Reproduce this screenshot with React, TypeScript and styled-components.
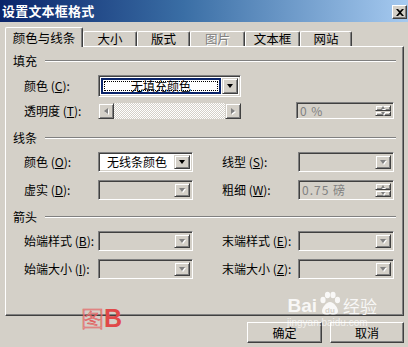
import React from 'react';
import styled, { createGlobalStyle } from 'styled-components';

const FONT = `"Noto Sans CJK SC", "Liberation Sans", sans-serif`;
const FACE = '#d4d0c8';

const Global = createGlobalStyle`
  html, body { margin: 0; padding: 0; background: ${FACE}; }
  body { font-family: ${FONT}; font-size: 12px; color: #000; }
  * { box-sizing: border-box; }
`;

const Dialog = styled.div`
  position: relative;
  width: 408px;
  height: 347px;
  overflow: hidden;
  background: ${FACE};
  display: flex;
  flex-direction: column;
`;

const TitleBar = styled.div`
  height: 22px;
  flex: none;
  display: flex;
  align-items: center;
  justify-content: space-between;
  padding: 0 1px 0 2px;
  background: linear-gradient(to right, #0a246a 0%, #3a6ea5 45%, #a6caf0 100%);
`;

const Title = styled.span`
  color: #fff;
  font-weight: bold;
  font-size: 13px;
  line-height: 22px;
  letter-spacing: 0.2px;
`;

const CloseBtn = styled.div`
  width: 15px;
  height: 14px;
  margin-top: 2px;
  background: ${FACE};
  border-top: 1px solid #fff;
  border-left: 1px solid #fff;
  border-right: 1px solid #404040;
  border-bottom: 1px solid #404040;
  box-shadow: inset -1px -1px #808080;
  display: flex;
  align-items: center;
  justify-content: center;
`;

const Tabs = styled.div`
  display: flex;
  align-items: flex-end;
  height: 19px;
  margin-top: 5px;
  padding-left: 5px;
  position: relative;
  z-index: 1;
`;

const Tab = styled.div<{ $active?: boolean; $disabled?: boolean; $w: number }>`
  width: ${(p) => p.$w}px;
  height: ${(p) => (p.$active ? 20 : 15)}px;
  margin-bottom: ${(p) => (p.$active ? -1 : 0)}px;
  background: ${FACE};
  border-top: 1px solid #fff;
  border-left: 1px solid #fff;
  border-right: 1px solid #404040;
  box-shadow: inset -1px 0 #808080;
  border-radius: 2px 2px 0 0;
  display: flex;
  align-items: center;
  justify-content: center;
  font-size: 12.5px;
  line-height: 14px;
  padding-top: ${(p) => (p.$active ? 1 : 0)}px;
  color: ${(p) => (p.$disabled ? '#808080' : '#000')};
  text-shadow: ${(p) => (p.$disabled ? '1px 1px #fff' : 'none')};
`;

const Panel = styled.div`
  margin-left: 5px;
  width: 399px;
  height: 270px;
  flex: none;
  border-top: 1px solid #fff;
  border-left: 1px solid #fff;
  border-right: 1px solid #404040;
  border-bottom: 1px solid #404040;
  box-shadow: inset -1px -1px #808080;
  padding-left: 7px;
  display: flex;
  flex-direction: column;
`;

const SectionHeader = styled.div<{ $mt: number }>`
  display: flex;
  align-items: center;
  height: 14px;
  margin-top: ${(p) => p.$mt}px;
  gap: 8px;
  padding-right: 7px;
  line-height: 14px;
`;

const HeaderLine = styled.div`
  flex: 1;
  height: 2px;
  border-top: 1px solid #808080;
  border-bottom: 1px solid #fff;
`;

const Row = styled.div<{ $mt: number; $h: number }>`
  display: grid;
  grid-template-columns: 74px 124px 76px 96px;
  align-items: center;
  height: ${(p) => p.$h}px;
  margin-top: ${(p) => p.$mt}px;
  padding-left: 11px;
`;

const Label = styled.span`
  font-size: 12px;
  line-height: 14px;
  white-space: nowrap;
`;

const U = styled.span`
  text-decoration: underline;
`;

const ComboBox = styled.div<{ $w: number; $h: number; $disabled?: boolean; $span?: boolean }>`
  width: ${(p) => p.$w}px;
  height: ${(p) => p.$h}px;
  grid-column: ${(p) => (p.$span ? 'span 2' : 'auto')};
  border-top: 1px solid #808080;
  border-left: 1px solid #808080;
  border-right: 1px solid #fff;
  border-bottom: 1px solid #fff;
  box-shadow: inset 1px 1px #404040, inset -1px -1px ${FACE};
  background: ${(p) => (p.$disabled ? FACE : '#fff')};
  display: flex;
  align-items: stretch;
  padding: 2px;
`;

const ComboText = styled.div`
  flex: 1;
  display: flex;
  align-items: center;
  padding-left: 6px;
  font-size: 12px;
  line-height: 14px;
  white-space: nowrap;
`;

const FocusText = styled.div`
  flex: 1;
  margin-right: 1px;
  border: 2px solid #0a246a;
  background: #fff;
  display: flex;
  align-items: stretch;
  padding: 1px;
`;

const FocusInner = styled.div`
  flex: 1;
  outline: 1px dotted #000;
  outline-offset: -1px;
  display: flex;
  align-items: center;
  justify-content: center;
  font-size: 12px;
  line-height: 14px;
  white-space: nowrap;
`;

const RaisedBtn = styled.div<{ $w: number }>`
  width: ${(p) => p.$w}px;
  flex: none;
  background: ${FACE};
  border-top: 1px solid ${FACE};
  border-left: 1px solid ${FACE};
  border-right: 1px solid #404040;
  border-bottom: 1px solid #404040;
  box-shadow: inset 1px 1px #fff, inset -1px -1px #808080;
  display: flex;
  align-items: center;
  justify-content: center;
`;

const DownTri = styled.div<{ $disabled?: boolean }>`
  width: 0;
  height: 0;
  border-left: 3.5px solid transparent;
  border-right: 3.5px solid transparent;
  border-top: 4px solid ${(p) => (p.$disabled ? '#808080' : '#000')};
  filter: ${(p) => (p.$disabled ? 'drop-shadow(1px 1px 0 #fff)' : 'none')};
`;

const SideTri = styled.div<{ $dir: 'left' | 'right' }>`
  width: 0;
  height: 0;
  border-top: 3.5px solid transparent;
  border-bottom: 3.5px solid transparent;
  ${(p) => (p.$dir === 'left' ? 'border-right: 4px solid #808080;' : 'border-left: 4px solid #808080;')}
  filter: drop-shadow(1px 1px 0 #fff);
`;

const SmallTri = styled.div<{ $up?: boolean }>`
  width: 0;
  height: 0;
  border-left: 2.5px solid transparent;
  border-right: 2.5px solid transparent;
  ${(p) => (p.$up ? 'border-bottom: 3px solid #808080;' : 'border-top: 3px solid #808080;')}
  filter: drop-shadow(1px 1px 0 #fff);
`;

const ScrollBar = styled.div`
  width: 143px;
  height: 16px;
  grid-column: span 2;
  display: flex;
`;

const ScrollTrack = styled.div`
  flex: 1;
  background: repeating-conic-gradient(#ffffff 0 25%, ${FACE} 0 50%) 0 0 / 2px 2px;
`;

const SpinBox = styled.div<{ $w: number; $h: number; $ml?: number }>`
  width: ${(p) => p.$w}px;
  height: ${(p) => p.$h}px;
  margin-left: ${(p) => p.$ml ?? 0}px;
  border-top: 1px solid #808080;
  border-left: 1px solid #808080;
  border-right: 1px solid #fff;
  border-bottom: 1px solid #fff;
  box-shadow: inset 1px 1px #404040, inset -1px -1px ${FACE};
  background: ${FACE};
  display: flex;
  padding: 2px;
`;

const SpinText = styled.div`
  flex: 1;
  display: flex;
  align-items: center;
  padding-left: 1px;
  color: #808080;
  font-size: 12px;
  line-height: 14px;
  letter-spacing: 1px;
`;

const SpinBtns = styled.div`
  width: 16px;
  display: flex;
  flex-direction: column;
`;

const SpinBtn = styled(RaisedBtn)`
  flex: 1;
`;

const Buttons = styled.div`
  display: flex;
  justify-content: flex-end;
  gap: 8px;
  margin-top: 6px;
  padding-right: 4px;
`;

const PushButton = styled.div<{ $w: number }>`
  width: ${(p) => p.$w}px;
  height: 21px;
  background: ${FACE};
  border-top: 1px solid #fff;
  border-left: 1px solid #fff;
  border-right: 1px solid #404040;
  border-bottom: 1px solid #404040;
  box-shadow: inset -1px -1px #808080;
  display: flex;
  align-items: center;
  justify-content: center;
  font-size: 12px;
  line-height: 14px;
`;

const Stamp = styled.div`
  position: absolute;
  left: 81px;
  top: 303px;
  display: flex;
  align-items: baseline;
  font-family: "Liberation Sans", "Noto Sans CJK SC", sans-serif;
  font-size: 24px;
  line-height: 28px;
`;

const StampHan = styled.span`
  font-family: "Noto Sans CJK SC", sans-serif;
  font-weight: 300;
  color: rgba(240, 170, 170, 0.6);
  -webkit-text-stroke: 0.6px #e05a5a;
  font-size: 23px;
`;

const StampB = styled.span`
  color: #e04848;
  font-weight: bold;
  font-size: 25px;
`;

const Watermark = styled.div`
  position: absolute;
  left: 287px;
  top: 291px;
  display: flex;
  flex-direction: column;
  align-items: center;
  color: rgba(255, 255, 255, 0.85);
`;

const WmTop = styled.div`
  display: flex;
  align-items: flex-end;
  font-family: "Liberation Sans", sans-serif;
  font-weight: bold;
  font-size: 19px;
  line-height: 22px;
`;

const WmCn = styled.span`
  font-family: "Noto Sans CJK SC", sans-serif;
  font-weight: normal;
  font-size: 17px;
`;

const WmUrl = styled.div`
  font-family: "Liberation Sans", sans-serif;
  font-size: 10px;
  line-height: 12px;
  color: rgba(255, 255, 255, 0.7);
  margin-right: 10px;
`;

const Combo: React.FC<{ w: number; h?: number; value?: string; disabled?: boolean }> = ({ w, h = 20, value, disabled }) => (
  <ComboBox $w={w} $h={h} $disabled={disabled}>
    <ComboText>{value}</ComboText>
    <RaisedBtn $w={16}>
      <DownTri $disabled={disabled} />
    </RaisedBtn>
  </ComboBox>
);

const Spin: React.FC<{ w: number; h: number; value: string; ml?: number }> = ({ w, h, value, ml }) => (
  <SpinBox $w={w} $h={h} $ml={ml}>
    <SpinText>{value}</SpinText>
    <SpinBtns>
      <SpinBtn $w={16}>
        <SmallTri $up />
      </SpinBtn>
      <SpinBtn $w={16}>
        <SmallTri />
      </SpinBtn>
    </SpinBtns>
  </SpinBox>
);

const Key: React.FC<{ text: string; k: string }> = ({ text, k }) => (
  <Label>
    {text} (<U>{k}</U>):
  </Label>
);

const Paw = () => (
  <svg width="24" height="26" viewBox="0 0 24 26" style={{ margin: '0 1px' }}>
    <g fill="rgba(255,255,255,0.85)">
      <ellipse cx="5" cy="9" rx="2.6" ry="3.2" />
      <ellipse cx="9.5" cy="4" rx="2.6" ry="3.2" />
      <ellipse cx="15" cy="4" rx="2.6" ry="3.2" />
      <ellipse cx="19.5" cy="9" rx="2.6" ry="3.2" />
      <path d="M12 11 C8 11 4 17 4 20 C4 24 8 24 12 23 C16 24 20 24 20 20 C20 17 16 11 12 11 Z" />
    </g>
    <text x="12" y="22" textAnchor="middle" fontSize="8" fontFamily="Liberation Sans, sans-serif" fill="#d4d0c8" fontWeight="bold">du</text>
  </svg>
);

export default function App() {
  return (
    <>
      <Global />
      <Dialog>
        <TitleBar>
          <Title>设置文本框格式</Title>
          <CloseBtn>
            <svg width="8" height="7" viewBox="0 0 8 7">
              <path d="M0 0 L2 0 L4 2 L6 0 L8 0 L5 3.5 L8 7 L6 7 L4 5 L2 7 L0 7 L3 3.5 Z" fill="#000" />
            </svg>
          </CloseBtn>
        </TitleBar>
        <Tabs>
          <Tab $active $w={78}>颜色与线条</Tab>
          <Tab $w={54}>大小</Tab>
          <Tab $w={53}>版式</Tab>
          <Tab $w={55} $disabled>图片</Tab>
          <Tab $w={55}>文本框</Tab>
          <Tab $w={52}>网站</Tab>
        </Tabs>
        <Panel>
          <SectionHeader $mt={7}>
            <Label>填充</Label>
            <HeaderLine />
          </SectionHeader>
          <Row $mt={7} $h={22}>
            <Key text="颜色" k="C" />
            <ComboBox $w={143} $h={22} $span>
              <FocusText>
                <FocusInner>无填充颜色</FocusInner>
              </FocusText>
              <RaisedBtn $w={16}>
                <DownTri />
              </RaisedBtn>
            </ComboBox>
          </Row>
          <Row $mt={5} $h={17}>
            <Key text="透明度" k="T" />
            <ScrollBar>
              <RaisedBtn $w={16}>
                <SideTri $dir="left" />
              </RaisedBtn>
              <ScrollTrack />
              <RaisedBtn $w={16}>
                <SideTri $dir="right" />
              </RaisedBtn>
            </ScrollBar>
            <Spin w={98} h={17} value="0 %" ml={-2} />
          </Row>
          <SectionHeader $mt={12}>
            <Label>线条</Label>
            <HeaderLine />
          </SectionHeader>
          <Row $mt={7} $h={20}>
            <Key text="颜色" k="O" />
            <Combo w={95} value="无线条颜色" />
            <Key text="线型" k="S" />
            <Combo w={96} disabled />
          </Row>
          <Row $mt={8} $h={20}>
            <Key text="虚实" k="D" />
            <Combo w={95} disabled />
            <Key text="粗细" k="W" />
            <Spin w={96} h={20} value="0.75 磅" />
          </Row>
          <SectionHeader $mt={10}>
            <Label>箭头</Label>
            <HeaderLine />
          </SectionHeader>
          <Row $mt={7} $h={20}>
            <Key text="始端样式" k="B" />
            <Combo w={95} disabled />
            <Key text="末端样式" k="E" />
            <Combo w={96} disabled />
          </Row>
          <Row $mt={8} $h={20}>
            <Key text="始端大小" k="I" />
            <Combo w={95} disabled />
            <Key text="末端大小" k="Z" />
            <Combo w={96} disabled />
          </Row>
        </Panel>
        <Buttons>
          <PushButton $w={75}>确定</PushButton>
          <PushButton $w={74}>取消</PushButton>
        </Buttons>
        <Stamp>
          <StampHan>图</StampHan>
          <StampB>B</StampB>
        </Stamp>
        <Watermark>
          <WmTop>
            Bai
            <Paw />
            <WmCn>经验</WmCn>
          </WmTop>
          <WmUrl>jingyan.baidu.com</WmUrl>
        </Watermark>
      </Dialog>
    </>
  );
}
